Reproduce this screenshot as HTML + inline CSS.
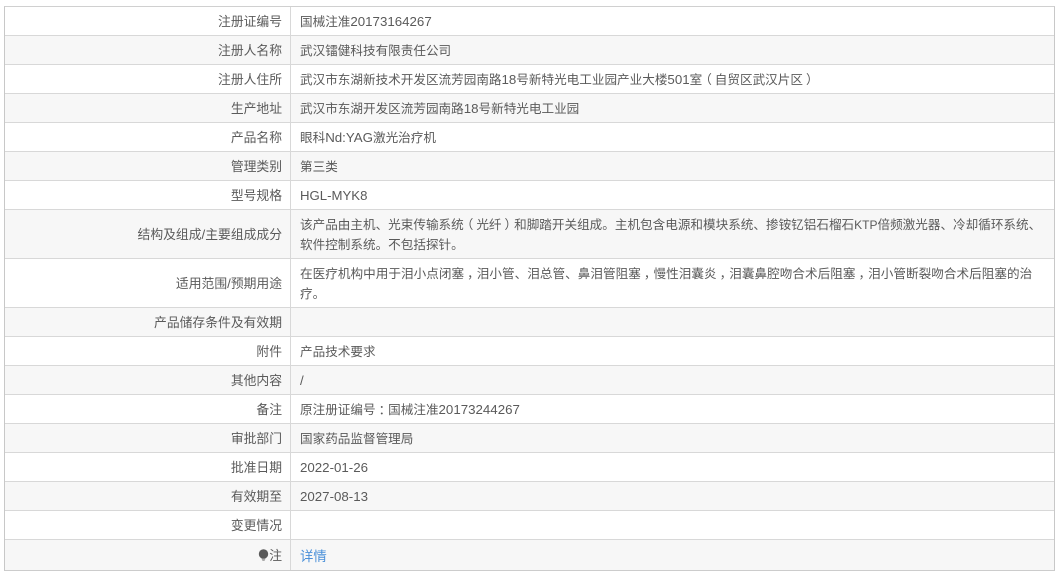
<!DOCTYPE html>
<html><head><meta charset="utf-8">
<style>
html,body{margin:0;padding:0;background:#fff;width:1061px;height:572px;overflow:hidden}
.w{position:absolute;left:4px;top:6px;width:1051px;height:565px;border-left:1px solid #c8c8c8;border-top:1px solid #d0d0d0;border-right:1px solid #c8c8c8;border-bottom:1px solid #ccc;box-sizing:border-box;font:12.6px/20px "Liberation Sans","Noto Sans CJK SC",sans-serif;color:#5a5a5a;white-space:nowrap}
.r{position:absolute;left:0;right:0;border-bottom:1px solid #d8d8d8;box-sizing:border-box}
.r.g{background:#f7f7f7}
.l{position:absolute;left:0;width:277px;text-align:right;top:5px;font-size:12.8px}
.v{position:absolute;left:295px;right:8px;top:5px}
.s{position:absolute;left:285px;top:0;bottom:0;width:1px;background:#d8d8d8}
i{font-style:normal;font-size:13.3px}
b{font-weight:normal;position:relative;left:3px}
u{text-decoration:none;position:relative;left:-3px}
a{color:#4a90d9;font-size:13.4px;text-decoration:none}
</style></head><body>
<div class="w">
<div class="r" style="top:0;height:29px"><div class="s"></div><div class="l">注册证编号</div><div class="v">国械注准<i>20173164267</i></div></div>
<div class="r g" style="top:29px;height:29px"><div class="s"></div><div class="l">注册人名称</div><div class="v">武汉镭健科技有限责任公司</div></div>
<div class="r" style="top:58px;height:29px"><div class="s"></div><div class="l">注册人住所</div><div class="v">武汉市东湖新技术开发区流芳园南路<i>18</i>号新特光电工业园产业大楼<i>501</i>室<u>（</u>自贸区武汉片区<b>）</b></div></div>
<div class="r g" style="top:87px;height:29px"><div class="s"></div><div class="l">生产地址</div><div class="v">武汉市东湖开发区流芳园南路<i>18</i>号新特光电工业园</div></div>
<div class="r" style="top:116px;height:29px"><div class="s"></div><div class="l">产品名称</div><div class="v">眼科<i>Nd:YAG</i>激光治疗机</div></div>
<div class="r g" style="top:145px;height:29px"><div class="s"></div><div class="l">管理类别</div><div class="v">第三类</div></div>
<div class="r" style="top:174px;height:29px"><div class="s"></div><div class="l">型号规格</div><div class="v"><i style="font-size:13.2px">HGL-MYK8</i></div></div>
<div class="r g" style="top:203px;height:49px"><div class="s"></div><div class="l" style="top:15px">结构及组成<i>/</i>主要组成成分</div><div class="v">该产品由主机、光束传输系统<u>（</u>光纤<b>）</b>和脚踏开关组成。主机包含电源和模块系统、掺铵钇铝石榴石<i style="font-size:12px">KTP</i>倍频激光器、冷却循环系统、<br>软件控制系统。不包括探针。</div></div>
<div class="r" style="top:252px;height:49px"><div class="s"></div><div class="l" style="top:15px">适用范围<i>/</i>预期用途</div><div class="v" style="letter-spacing:.03px">在医疗机构中用于泪小点闭塞<b>，</b>泪小管、泪总管、鼻泪管阻塞<b>，</b>慢性泪囊炎<b>，</b>泪囊鼻腔吻合术后阻塞<b>，</b>泪小管断裂吻合术后阻塞的治<br>疗。</div></div>
<div class="r g" style="top:301px;height:29px"><div class="s"></div><div class="l">产品储存条件及有效期</div><div class="v"></div></div>
<div class="r" style="top:330px;height:29px"><div class="s"></div><div class="l">附件</div><div class="v">产品技术要求</div></div>
<div class="r g" style="top:359px;height:29px"><div class="s"></div><div class="l">其他内容</div><div class="v"><i>/</i></div></div>
<div class="r" style="top:388px;height:29px"><div class="s"></div><div class="l">备注</div><div class="v">原注册证编号<b>：</b>国械注准<i>20173244267</i></div></div>
<div class="r g" style="top:417px;height:29px"><div class="s"></div><div class="l">审批部门</div><div class="v">国家药品监督管理局</div></div>
<div class="r" style="top:446px;height:29px"><div class="s"></div><div class="l">批准日期</div><div class="v"><i>2022-01-26</i></div></div>
<div class="r g" style="top:475px;height:29px"><div class="s"></div><div class="l">有效期至</div><div class="v"><i>2027-08-13</i></div></div>
<div class="r" style="top:504px;height:29px"><div class="s"></div><div class="l">变更情况</div><div class="v"></div></div>
<div class="r g" style="top:533px;height:30px;border-bottom:0"><div class="s"></div><div class="l" style="top:6px"><svg width="11" height="13" viewBox="0 0 11 13" style="vertical-align:-2px"><circle cx="5.5" cy="5" r="4.7" fill="#5a5a5a"/><path d="M3.5 9.5h4L6.5 12h-2z" fill="#aaa"/></svg>注</div><div class="v" style="top:7px"><a href="#">详情</a></div></div>
</div>
</body></html>
